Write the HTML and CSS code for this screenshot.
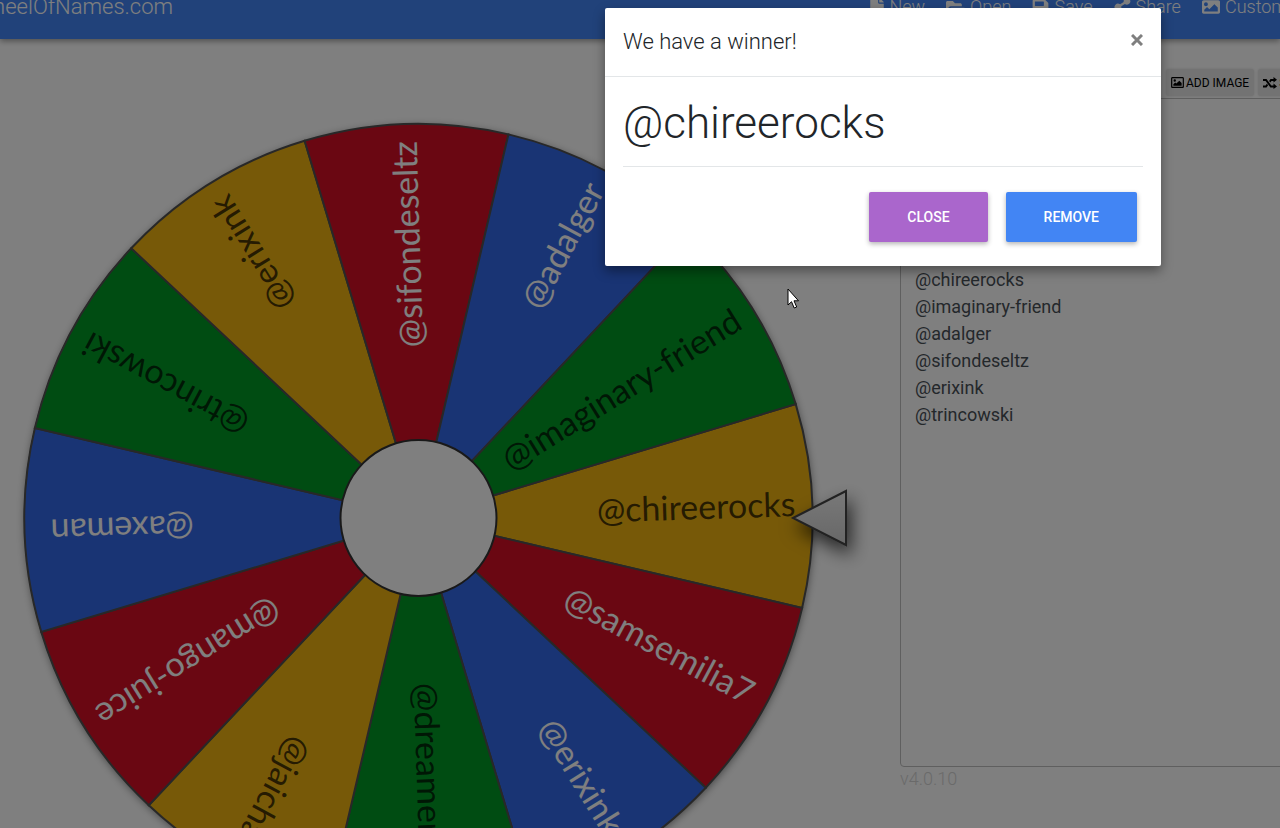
FILE: index.html
```html
<!DOCTYPE html>
<html lang="en">
<head>
<meta charset="utf-8">
<title>WheelOfNames.com</title>
<link rel="stylesheet" href="styles.css">
</head>
<body>
<div class="page">
  <header class="navbar">
    <div class="brand"><a href="#">WheelOfNames.com</a></div>
    <nav class="menu">
      <a href="#"><svg width="14" height="18" viewBox="0 0 384 512"><path d="M224 136V0H24C11 0 0 11 0 24v464c0 13 11 24 24 24h336c13 0 24-11 24-24V160H248c-13 0-24-11-24-24zm160-14v6H256V0h6c6 0 13 3 17 7l98 98c4 4 7 11 7 17z"/></svg>New</a>
      <a href="#"><svg width="19" height="18" viewBox="0 0 576 512"><path d="M573 312l-73 124c-12 22-42 40-67 40H60c-20 0-32-20-22-36l73-124c12-22 42-40 67-40h373c20 0 32 20 22 36zM178 236h302v-48c0-27-21-48-48-48H272l-64-64H48C21 76 0 97 0 124v278l70-119c22-36 64-47 108-47z"/></svg>Open</a>
      <a href="#"><svg width="17" height="18" viewBox="0 0 448 512"><path d="M434 130l-84-84c-9-9-21-14-34-14H48C21 32 0 53 0 80v352c0 27 21 48 48 48h352c27 0 48-21 48-48V164c0-13-5-25-14-34zM224 416a64 64 0 1 1 0-128 64 64 0 0 1 0 128zm96-305v101c0 7-5 12-12 12H76c-7 0-12-5-12-12V108c0-7 5-12 12-12h228c10 0 16 8 16 15z"/></svg>Save</a>
      <a href="#"><svg width="17" height="18" viewBox="0 0 448 512"><path d="M352 320c-23 0-44 8-60 21l-103-64a97 97 0 0 0 0-42l103-64a96 96 0 1 0-34-54l-103 64a96 96 0 1 0 0 150l103 64a96 96 0 1 0 94-75z"/></svg>Share</a>
      <a href="#"><svg width="18" height="18" viewBox="0 0 512 512"><path d="M464 448H48c-27 0-48-21-48-48V112c0-27 21-48 48-48h416c27 0 48 21 48 48v288c0 27-21 48-48 48zM112 120a56 56 0 1 0 0 112 56 56 0 0 0 0-112zM64 384h384V272l-88-88c-4-4-12-4-16 0L208 320l-56-56c-4-4-12-4-16 0l-72 72v48z"/></svg>Customize</a>
    </nav>
  </header>
  <main class="content">
    <section class="wheel-area">
      <svg class="wheel" viewBox="0 39 900 900" role="img" aria-label="Wheel of names">
        <defs>
          <path id="slice" d="M0 0L380.600-102A394 394 0 0 1 380.600 102Z"/>
          <filter id="soft" x="-20%" y="-20%" width="140%" height="140%"><feDropShadow dx="1" dy="2" stdDeviation="4" flood-opacity=".5"/></filter>
          <filter id="cast" x="-100%" y="-100%" width="300%" height="300%"><feDropShadow dx="4" dy="9" stdDeviation="9" flood-opacity=".7"/></filter>
          <linearGradient id="metal" x1="0" y1="0" x2="0" y2="1"><stop offset="0" stop-color="#f2f2f2"/><stop offset="1" stop-color="#cfcfcf"/></linearGradient>
        </defs>
        <circle cx="418" cy="518" r="394" filter="url(#soft)"/>
        <g transform="translate(418.500 518)">
          <g transform="rotate(-1.8)"><use href="#slice" class="yellow"/><text class="dark" x="377" y="10">@chireerocks</text></g>
          <g transform="rotate(28.2)"><use href="#slice" class="red"/><text x="377" y="10">@samsemilia7</text></g>
          <g transform="rotate(58.2)"><use href="#slice" class="blue"/><text class="from-hub" x="241" y="10">@erixink</text></g>
          <g transform="rotate(88.2)"><use href="#slice" class="green"/><text class="dark from-hub" x="165" y="10">@dreamer</text></g>
          <g transform="rotate(118.2)"><use href="#slice" class="yellow"/><text class="dark from-hub" x="250" y="10">@jaicha</text></g>
          <g transform="rotate(148.2)"><use href="#slice" class="red"/><text x="377" y="10">@mango-juice</text></g>
          <g transform="rotate(178.2)"><use href="#slice" class="blue"/><text x="368" y="10">@axeman</text></g>
          <g transform="rotate(208.2)"><use href="#slice" class="green"/><text class="dark" x="377" y="10">@trincowski</text></g>
          <g transform="rotate(238.2)"><use href="#slice" class="yellow"/><text class="dark" x="377" y="10">@erixink</text></g>
          <g transform="rotate(268.2)"><use href="#slice" class="red"/><text x="377" y="10">@sifondeseltz</text></g>
          <g transform="rotate(298.2)"><use href="#slice" class="blue"/><text x="377" y="10">@adalger</text></g>
          <g transform="rotate(328.2)"><use href="#slice" class="green"/><text class="dark" x="377" y="10">@imaginary-friend</text></g>
          <circle class="hub" r="78"/>
        </g>
        <path class="pointer" d="M793 518L846 491V545Z" filter="url(#cast)"/>
      </svg>
    </section>
    <section class="entries">
      <div class="tools">
        <button type="button"><svg width="13" height="11" viewBox="0 0 14 12"><path fill-rule="evenodd" d="M1.500 0h11C13.300 0 14 .7 14 1.500v9c0 .8-.7 1.500-1.500 1.500h-11C.7 12 0 11.300 0 10.500v-9C0 .7.700 0 1.500 0zM1.300 1.300v9.400h11.400V1.300zM4 2.500a1.300 1.300 0 1 1 0 2.600 1.300 1.300 0 0 1 0-2.600zM2.500 9.500V8l2-2 1.200 1.200L9 4l2.500 2.500v3z"/></svg>ADD IMAGE</button>
        <button type="button"><svg width="14" height="12" viewBox="0 0 14 12"><path d="M0 2h3.500L8.300 8.500h2.200V6.500L14 9.400l-3.500 2.600v-1.600H7.400L2.600 3.900H0zM10.500 0L14 2.700l-3.500 2.900V3.900H8.500L7.300 5.500 6.100 3.900 7.500 2h3zM0 8.500h2.600L3.900 6.700 5.100 8.300 3.500 10.400H0z"/></svg>SHUFFLE</button>
      </div>
      <textarea class="names" aria-label="Names" spellcheck="false">@axeman
@mango-juice
@jaicha
@dreamer
@erixink
@samsemilia7
@chireerocks
@imaginary-friend
@adalger
@sifondeseltz
@erixink
@trincowski</textarea>
      <p class="version">v4.0.10</p>
    </section>
  </main>
</div>
<div class="backdrop">
  <div class="modal" role="dialog" aria-labelledby="modal-title">
    <div class="modal-head">
      <h1 id="modal-title">We have a winner!</h1>
      <button type="button" class="dismiss" aria-label="Dismiss"><svg width="12" height="12" viewBox="0 0 12 12"><path d="M1 1L11 11M11 1L1 11"/></svg></button>
    </div>
    <div class="modal-body">
      <h2>@chireerocks</h2>
      <div class="actions">
        <button type="button" class="btn close">CLOSE</button>
        <button type="button" class="btn remove">REMOVE</button>
      </div>
    </div>
  </div>
</div>
<svg class="cursor" width="14" height="22" viewBox="0 0 14 22"><path d="M1 1V17L4.500 13.700 7.200 20 9.700 19 7 12.800H11.500Z"/></svg>
</body>
</html>
```
FILE: styles.css
```css
* {
  box-sizing: border-box;
}

body {
  margin: 0;
  height: 100vh;
  overflow: hidden;
  background: #fff;
  color: #212529;
  font-family: Roboto, sans-serif;
}

button {
  border: 0;
  font-family: inherit;
}

.page {
  display: flex;
  flex-direction: column;
  height: 100vh;
  overflow: hidden;
}

/* The page is scrolled down slightly, so the bar starts above the window. */
.navbar {
  display: grid;
  grid-template-columns: 68% 1fr;
  align-items: center;
  flex: none;
  height: 63px;
  margin-top: -24px;
  padding-bottom: 2px;
  background: #4285f4;
  box-shadow: 0 2px 6px rgba(0, 0, 0, .4);
  font-weight: 300;
  z-index: 1;
}

.navbar a {
  color: #fff;
  text-decoration: none;
}

.brand {
  display: flex;
  justify-content: flex-end;
  width: 173px;
  font-size: 22px;
  line-height: 30px;
}

.menu {
  display: flex;
  gap: 21px;
  font-size: 18px;
  line-height: 24px;
  white-space: nowrap;
}

.menu a {
  display: flex;
  align-items: center;
  gap: 5px;
}

.menu svg {
  fill: #fff;
}

.content {
  display: grid;
  grid-template-columns: 900fr 380fr;
  flex: 1;
  min-height: 0;
}

.wheel-area {
  min-width: 0;
  overflow: hidden;
}

.wheel {
  display: block;
  width: 100%;
}

.wheel use {
  stroke: #505050;
  stroke-width: 2;
}

.wheel text {
  fill: #fff;
  font-family: Lato, sans-serif;
  font-size: 34px;
  text-anchor: end;
}

.wheel .dark {
  fill: #000;
  fill-opacity: .7;
}

.wheel .from-hub {
  text-anchor: start;
}

.yellow {
  fill: #eeb211;
}

.red {
  fill: #d50f25;
}

.blue {
  fill: #3369e8;
}

.green {
  fill: #009925;
}

.hub {
  fill: #fff;
  stroke: #333;
  stroke-width: 2;
}

.pointer {
  fill: url(#metal);
  stroke: #444;
  stroke-width: 2;
}

.entries {
  display: flex;
  flex-direction: column;
  padding-top: 30px;
  min-width: 0;
}

.tools {
  display: flex;
  gap: 4px;
  margin-left: 70%;
  height: 27px;
}

.tools button {
  display: flex;
  align-items: center;
  gap: 2px;
  padding: 0 5px;
  border-radius: 3px;
  background: #e6e6e6;
  box-shadow: 0 0 3px rgba(0, 0, 0, .15);
  color: #000;
  font-size: 12px;
  line-height: 24px;
  white-space: nowrap;
}

.names {
  flex: none;
  width: 112%;
  height: 669px;
  margin: 2px 0 0;
  padding: 5px 14px;
  border: 1px solid #bfbfbf;
  border-radius: 4px;
  outline: 0;
  background: transparent;
  color: #495057;
  font: 18px/27px Roboto, sans-serif;
  resize: none;
}

.version {
  margin: 0;
  color: #d5d5d5;
  font-size: 18px;
  font-weight: 300;
  line-height: 24px;
}

.backdrop {
  position: absolute;
  inset: 0;
  display: flex;
  justify-content: flex-end;
  align-items: flex-start;
  padding: 8px 119px 0;
  background: rgba(0, 0, 0, .5);
  z-index: 2;
}

.modal {
  width: 556px;
  border-radius: 2px;
  background: #fff;
  box-shadow: 0 5px 12px rgba(0, 0, 0, .4);
}

.modal-head {
  display: flex;
  justify-content: space-between;
  align-items: flex-start;
  padding: 17px 18px 18px;
  border-bottom: 1px solid #e3e6e8;
}

.modal-head h1 {
  margin: 0;
  font-size: 22px;
  font-weight: 300;
  line-height: 33px;
}

.dismiss {
  display: flex;
  padding: 9px 0;
  background: none;
}

.dismiss svg {
  fill: none;
  stroke: #7f7f7f;
  stroke-width: 3;
}

.modal-body {
  padding: 18px;
}

.modal-body h2 {
  margin: 0;
  padding-bottom: 14px;
  border-bottom: 1px solid #e3e6e8;
  font-size: 44px;
  font-weight: 300;
  line-height: 57px;
}

.actions {
  display: flex;
  justify-content: flex-end;
  gap: 18px;
  padding: 25px 6px 6px;
}

.btn {
  height: 50px;
  padding: 0 38px;
  border-radius: 2px;
  box-shadow: 0 2px 5px rgba(0, 0, 0, .3);
  color: #fff;
  font-size: 14px;
  font-weight: 500;
}

.close {
  background: #aa66cc;
}

.remove {
  background: #4285f4;
}

.cursor {
  position: absolute;
  left: 787px;
  top: 288px;
  fill: #fff;
  stroke: #000;
  z-index: 3;
}
```
